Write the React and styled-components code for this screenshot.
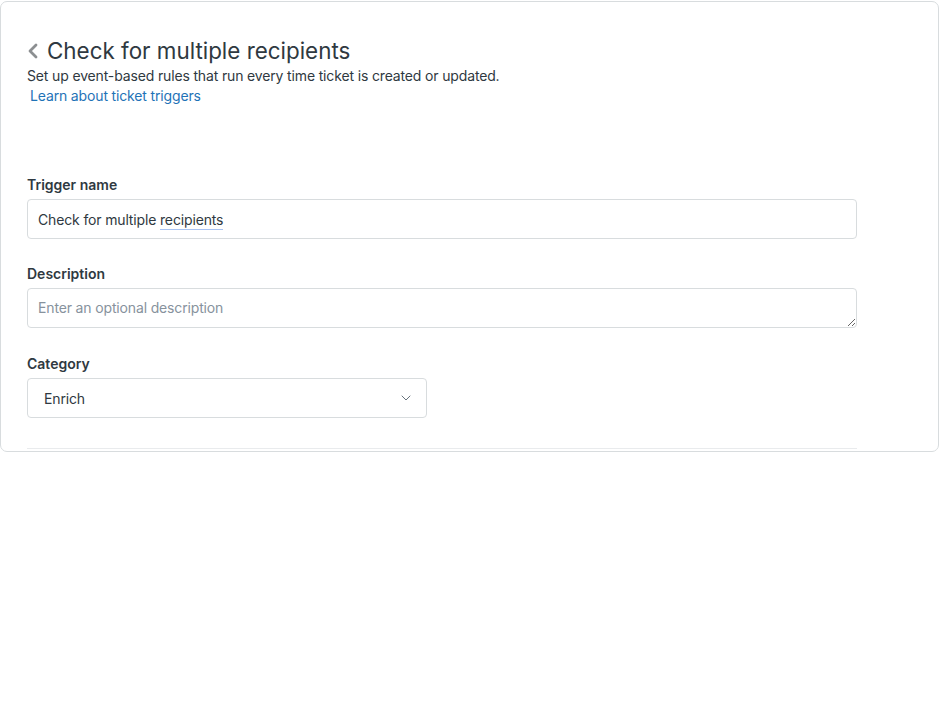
import React from 'react';
import styled, { createGlobalStyle } from 'styled-components';

const GlobalStyle = createGlobalStyle`
  html, body {
    margin: 0;
    padding: 0;
    background: #fff;
  }
  body {
    font-family: Inter, "Liberation Sans", Arial, sans-serif;
    color: #2f3941;
  }
`;

const Card = styled.div`
  box-sizing: border-box;
  width: 939px;
  height: 451px;
  margin-top: 1px;
  border: 1px solid #d8dcde;
  border-radius: 7px;
  padding: 34px 81px 0 26px;
  background: #fff;
`;

const Header = styled.header`
  display: flex;
  flex-direction: column;
`;

const TitleRow = styled.div`
  display: flex;
  align-items: center;
  gap: 8px;
  h1 {
    margin: 0;
    font-size: 22.4px;
    font-weight: 400;
    line-height: 30px;
    color: #2f3941;
  }
`;

const BackIcon = () => (
  <svg width="12" height="16" viewBox="0 0 12 16" aria-hidden="true">
    <path d="M9 2 L3 8 L9 14" fill="none" stroke="#8c8f91" strokeWidth="2.8" strokeLinecap="round" strokeLinejoin="round" />
  </svg>
);

const Subtitle = styled.p`
  margin: 0;
  font-size: 14px;
  line-height: 20px;
  letter-spacing: -0.15px;
`;

const LearnLink = styled.a`
  margin-left: 3px;
  font-size: 14px;
  line-height: 20px;
  letter-spacing: -0.15px;
  color: #1f73b7;
  text-decoration: none;
  align-self: flex-start;
`;

const Form = styled.form`
  display: flex;
  flex-direction: column;
  margin-top: 69px;
  padding-bottom: 30px;
  border-bottom: 1px solid #e9ebed;
`;

const Field = styled.div`
  display: flex;
  flex-direction: column;
  gap: 4px;
  margin-top: ${(p) => p.$space || '0'};
`;

const Label = styled.label`
  font-size: 14px;
  font-weight: 600;
  line-height: 20px;
  color: #2f3941;
`;

const Box = styled.div`
  box-sizing: border-box;
  display: flex;
  align-items: center;
  height: 40px;
  width: ${(p) => p.$width || '100%'};
  padding: 0 ${(p) => p.$padRight || '10px'} 0 ${(p) => p.$padLeft || '10px'};
  border: 1px solid #d8dcde;
  border-radius: 4px;
  font-size: 14px;
  letter-spacing: -0.15px;
  color: #2f3941;
  background: #fff;
`;

const Spell = styled.span`
  display: inline-block;
  line-height: 18px;
  padding-top: 2px;
  border-bottom: 1px solid #a9c3f2;
`;

const TextArea = styled.textarea`
  box-sizing: border-box;
  display: block;
  width: 100%;
  height: 40px;
  padding: 9px 10px;
  border: 1px solid #d8dcde;
  border-radius: 4px;
  font-family: inherit;
  font-size: 14px;
  line-height: 20px;
  letter-spacing: -0.15px;
  color: #2f3941;
  resize: vertical;
  outline: none;
  &::placeholder {
    color: #87929d;
  }
`;

const SelectText = styled.span`
  flex: 1;
`;

const ChevronDown = () => (
  <svg width="12" height="8" viewBox="0 0 12 8" aria-hidden="true">
    <path d="M2 2 L6 6 L10 2" fill="none" stroke="#68737d" strokeWidth="1" strokeLinecap="round" />
  </svg>
);

export default function App() {
  return (
    <>
      <GlobalStyle />
      <Card>
        <Header>
          <TitleRow>
            <BackIcon />
            <h1>Check for multiple recipients</h1>
          </TitleRow>
          <Subtitle>Set up event-based rules that run every time ticket is created or updated.</Subtitle>
          <LearnLink href="#">Learn about ticket triggers</LearnLink>
        </Header>
        <Form>
          <Field>
            <Label>Trigger name</Label>
            <Box>
              Check for multiple&nbsp;<Spell>recipients</Spell>
            </Box>
          </Field>
          <Field $space="25px">
            <Label>Description</Label>
            <TextArea placeholder="Enter an optional description" />
          </Field>
          <Field $space="26px">
            <Label>Category</Label>
            <Box $width="400px" $padLeft="16px" $padRight="14px">
              <SelectText>Enrich</SelectText>
              <ChevronDown />
            </Box>
          </Field>
        </Form>
      </Card>
    </>
  );
}
